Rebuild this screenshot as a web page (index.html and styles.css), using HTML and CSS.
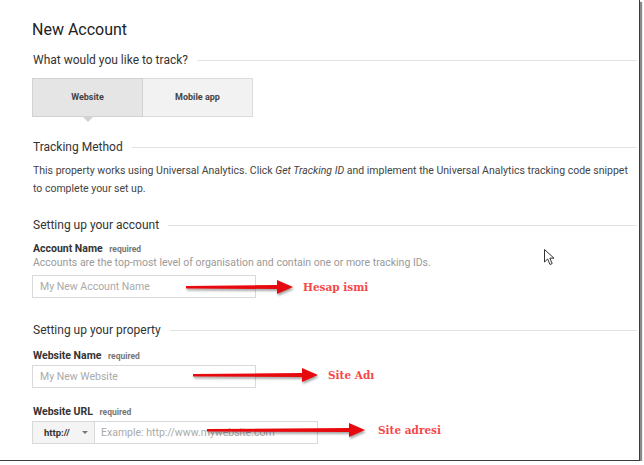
FILE: index.html
```html
<!DOCTYPE html>
<html>
<head>
<meta charset="utf-8">
<title>New Account</title>
<link rel="stylesheet" href="styles.css">
</head>
<body>

<div class="frame">
	<div class="page">
		<h1 class="title">New Account</h1>

		<h2 class="section first">What would you like to track?</h2>
		<div class="toggle">
			<div class="opt active">Website</div>
			<div class="opt">Mobile app</div>
		</div>

		<h2 class="section">Tracking Method</h2>
		<p class="note">This property works using Universal Analytics. Click <em>Get Tracking ID</em> and implement the Universal Analytics tracking code snippet to complete your set up.</p>

		<h2 class="section">Setting up your account</h2>
		<div class="field">
			<div class="label">Account Name <span class="req">required</span></div>
			<div class="hint">Accounts are the top-most level of organisation and contain one or more tracking IDs.</div>
			<div class="row">
				<div class="input">My New Account Name</div>
				<div class="mark mark-account">
					<svg width="107" height="16" viewBox="0 0 107 16"><polygon points="0,7 91,6 91,1 107,8 91,15 91,10 0,9.5" fill="#e8090f"/></svg>
					<span>Hesap ismi</span>
				</div>
			</div>
		</div>

		<h2 class="section">Setting up your property</h2>
		<div class="field">
			<div class="label">Website Name <span class="req">required</span></div>
			<div class="row">
				<div class="input">My New Website</div>
				<div class="mark mark-name">
					<svg width="125" height="16" viewBox="0 0 125 16"><polygon points="0,7 109,6 109,1 125,8 109,15 109,10 0,9.5" fill="#e8090f"/></svg>
					<span>Site Adı</span>
				</div>
			</div>
		</div>

		<div class="field">
			<div class="label">Website URL <span class="req">required</span></div>
			<div class="row">
				<div class="select">http:// <i class="caret"></i></div>
				<div class="input url">Example: http://www.mywebsite.com</div>
				<div class="mark mark-url">
					<svg width="158" height="16" viewBox="0 0 158 16"><polygon points="0,7 142,6 142,1 158,8 142,15 142,10 0,9.5" fill="#e8090f"/></svg>
					<span>Site adresi</span>
				</div>
			</div>
		</div>
	</div>

	<svg class="cursor" width="12" height="17" viewBox="0 0 12 17"><path d="M0.5 0.5 L0.5 13 L3.6 10 L6 15.5 L8.2 14.5 L5.8 9.2 L10 9.2 Z" fill="#fff" stroke="#333" stroke-width="1"/></svg>
</div>

</body>
</html>
```

FILE: styles.css
```css
body{
	margin:0;
	background:#fff;
	font-family:Roboto,"Liberation Sans",Arial,sans-serif;
	color:#333;
}
.frame{
	position:relative;
	width:639px;
	height:460px;
	background:#fff;
	border-right:1px solid #3c3c3c;
	border-bottom:1px solid #3c3c3c;
	box-shadow:2px 2px 1px #8a8a8a;
	overflow:hidden;
}
.page{
	padding:0 2px 0 32px;
}
.title{
	margin:0;
	padding-top:20px;
	font-size:16px;
	line-height:20px;
	font-weight:400;
	color:#222;
}
.section{
	display:flex;
	align-items:center;
	gap:9px;
	margin:22px 0 0;
	padding-left:1px;
	font-size:12px;
	line-height:16px;
	font-weight:400;
	color:#333;
}
.section::after{
	content:"";
	flex:1;
	height:1px;
	background:#e3e3e3;
}
.section.first{
	margin-top:12px;
}
.note + .section{
	margin-top:19px;
}
.field + .section{
	margin-top:24px;
}

/* track toggle */
.toggle{
	display:flex;
	margin-top:10px;
}
.opt{
	position:relative;
	box-sizing:border-box;
	width:110px;
	height:39px;
	line-height:37px;
	text-align:center;
	font-size:9px;
	font-weight:700;
	color:#444;
	background:#f2f2f2;
	border:1px solid #dcdcdc;
}
.opt + .opt{
	border-left:0;
}
.opt.active{
	width:111px;
	background:#e5e5e5;
	border-color:#d2d2d2;
}
.opt.active::after{
	content:"";
	position:absolute;
	left:50%;
	bottom:-6px;
	margin-left:-5px;
	border-left:5px solid transparent;
	border-right:5px solid transparent;
	border-top:5px solid #d2d2d2;
}

.note{
	margin:7px 0 0;
	padding-left:1px;
	font-size:10.5px;
	line-height:18px;
	color:#444;
}
.note em{
	font-style:italic;
}

/* form fields */
.field{
	margin-top:9px;
	padding-left:1px;
}
.field + .field{
	margin-top:17px;
}
.section + .field + .section + .field{
	margin-top:11px;
}
.label{
	font-size:10.5px;
	line-height:14px;
	font-weight:700;
	color:#333;
}
.req{
	margin-left:4px;
	font-size:8.5px;
	color:#777;
}
.hint{
	font-size:10.5px;
	line-height:14px;
	color:#9a9a9a;
}
.row{
	position:relative;
	display:flex;
	margin-top:2px;
	margin-left:-1px;
}
.hint + .row{
	margin-top:5px;
}
.input{
	box-sizing:border-box;
	width:224px;
	height:23px;
	line-height:21px;
	padding-left:7px;
	font-size:10.5px;
	color:#aaa;
	border:1px solid #d9d9d9;
}
.input.url{
	width:223px;
	padding-left:6px;
	border-left:0;
}
.select{
	box-sizing:border-box;
	display:flex;
	align-items:center;
	width:63px;
	height:23px;
	padding-left:11px;
	font-size:9.5px;
	font-weight:700;
	color:#333;
	background:#f4f4f4;
	border:1px solid #d9d9d9;
}
.caret{
	margin-left:12px;
	border-left:3px solid transparent;
	border-right:3px solid transparent;
	border-top:3px solid #777;
}

/* red annotations drawn over the form */
.mark{
	position:absolute;
	top:0;
	height:23px;
	display:flex;
	align-items:center;
	gap:10px;
	font-family:"DejaVu Serif",serif;
	font-size:10.5px;
	font-weight:700;
	color:#f54848;
}
.mark svg{
	display:block;
	filter:drop-shadow(1px 2px 1px rgba(0,0,0,.35));
}
.mark-account{
	left:154px;
}
.mark-name{
	left:161px;
	top:-2px;
}
.mark-url{
	left:175px;
	top:-3px;
	gap:13px;
}
.cursor{
	position:absolute;
	left:544px;
	top:249px;
}
```
